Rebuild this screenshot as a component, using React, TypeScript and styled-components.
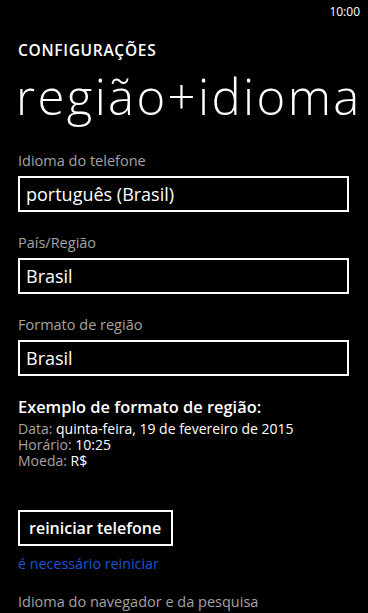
import React from 'react';
import styled, { createGlobalStyle } from 'styled-components';

const GlobalStyle = createGlobalStyle`
  html, body {
    margin: 0;
    padding: 0;
    background: #000;
  }

  body {
    font-family: 'Open Sans', 'Noto Sans', sans-serif;
    color: #fff;
    -webkit-font-smoothing: antialiased;
  }
`;

const Screen = styled.div`
  width: 368px;
  height: 613px;
  overflow: hidden;
  background: #000;
`;

const StatusBar = styled.div`
  display: flex;
  justify-content: flex-end;
  padding: 4px 8px 0 0;
  height: 16px;
  font-size: 12px;
  line-height: 16px;
`;

const Page = styled.div`
  padding: 0 19px 0 18px;
`;

const AppTitle = styled.h2`
  margin: 22px 0 0;
  font-size: 15.5px;
  line-height: 16px;
  font-weight: 600;
  letter-spacing: 0.7px;
`;

const PageTitle = styled.h1`
  margin: 10px 0 0 -2px;
  font-size: 49px;
  line-height: 56px;
  font-weight: 300;
  letter-spacing: 2.4px;
  white-space: nowrap;
`;

const Label = styled.div<{ $gap?: number }>`
  margin-top: ${(p) => p.$gap ?? 21}px;
  font-size: 14.5px;
  line-height: 20px;
  color: #a3a3a3;
`;

const PickerBox = styled.div`
  box-sizing: border-box;
  margin-top: 5px;
  height: 36px;
  padding: 0 6px;
  border: 2px solid #fff;
  font-size: 18px;
  line-height: 32px;
  white-space: nowrap;
`;

const ExampleTitle = styled.div`
  margin-top: 21px;
  font-size: 16.4px;
  line-height: 20px;
  font-weight: 600;
`;

const ExampleList = styled.div`
  margin-top: 4px;
  display: flex;
  flex-direction: column;
`;

const ExampleRow = styled.div`
  font-size: 14px;
  line-height: 16px;
`;

const Key = styled.span`
  color: #a3a3a3;
`;

const OutlineButton = styled.button`
  display: block;
  box-sizing: border-box;
  margin-top: 41px;
  height: 36px;
  padding: 0 10px 0 9px;
  border: 2px solid #fff;
  background: transparent;
  color: #fff;
  font-family: inherit;
  font-size: 16px;
  line-height: 32px;
  font-weight: 600;
`;

const Notice = styled.div`
  margin-top: 8px;
  font-size: 14.3px;
  line-height: 20px;
  color: #1c55d6;
`;

type Field = { label: string; value: string };

const fields: Field[] = [
  { label: 'Idioma do telefone', value: 'português (Brasil)' },
  { label: 'País/Região', value: 'Brasil' },
  { label: 'Formato de região', value: 'Brasil' },
];

const examples = [
  { key: 'Data:', value: 'quinta-feira, 19 de fevereiro de 2015' },
  { key: 'Horário:', value: '10:25' },
  { key: 'Moeda:', value: 'R$' },
];

export default function App() {
  return (
    <Screen>
      <GlobalStyle />
      <StatusBar>10:00</StatusBar>
      <Page>
        <AppTitle>CONFIGURAÇÕES</AppTitle>
        <PageTitle>região+idioma</PageTitle>

        {fields.map((f, i) => (
          <div key={f.label}>
            <Label $gap={i === 0 ? 27 : 21}>{f.label}</Label>
            <PickerBox>{f.value}</PickerBox>
          </div>
        ))}

        <ExampleTitle>Exemplo de formato de região:</ExampleTitle>
        <ExampleList>
          {examples.map((e) => (
            <ExampleRow key={e.key}>
              <Key>{e.key}</Key> {e.value}
            </ExampleRow>
          ))}
        </ExampleList>

        <OutlineButton>reiniciar telefone</OutlineButton>
        <Notice>é necessário reiniciar</Notice>

        <Label $gap={18}>Idioma do navegador e da pesquisa</Label>
      </Page>
    </Screen>
  );
}
